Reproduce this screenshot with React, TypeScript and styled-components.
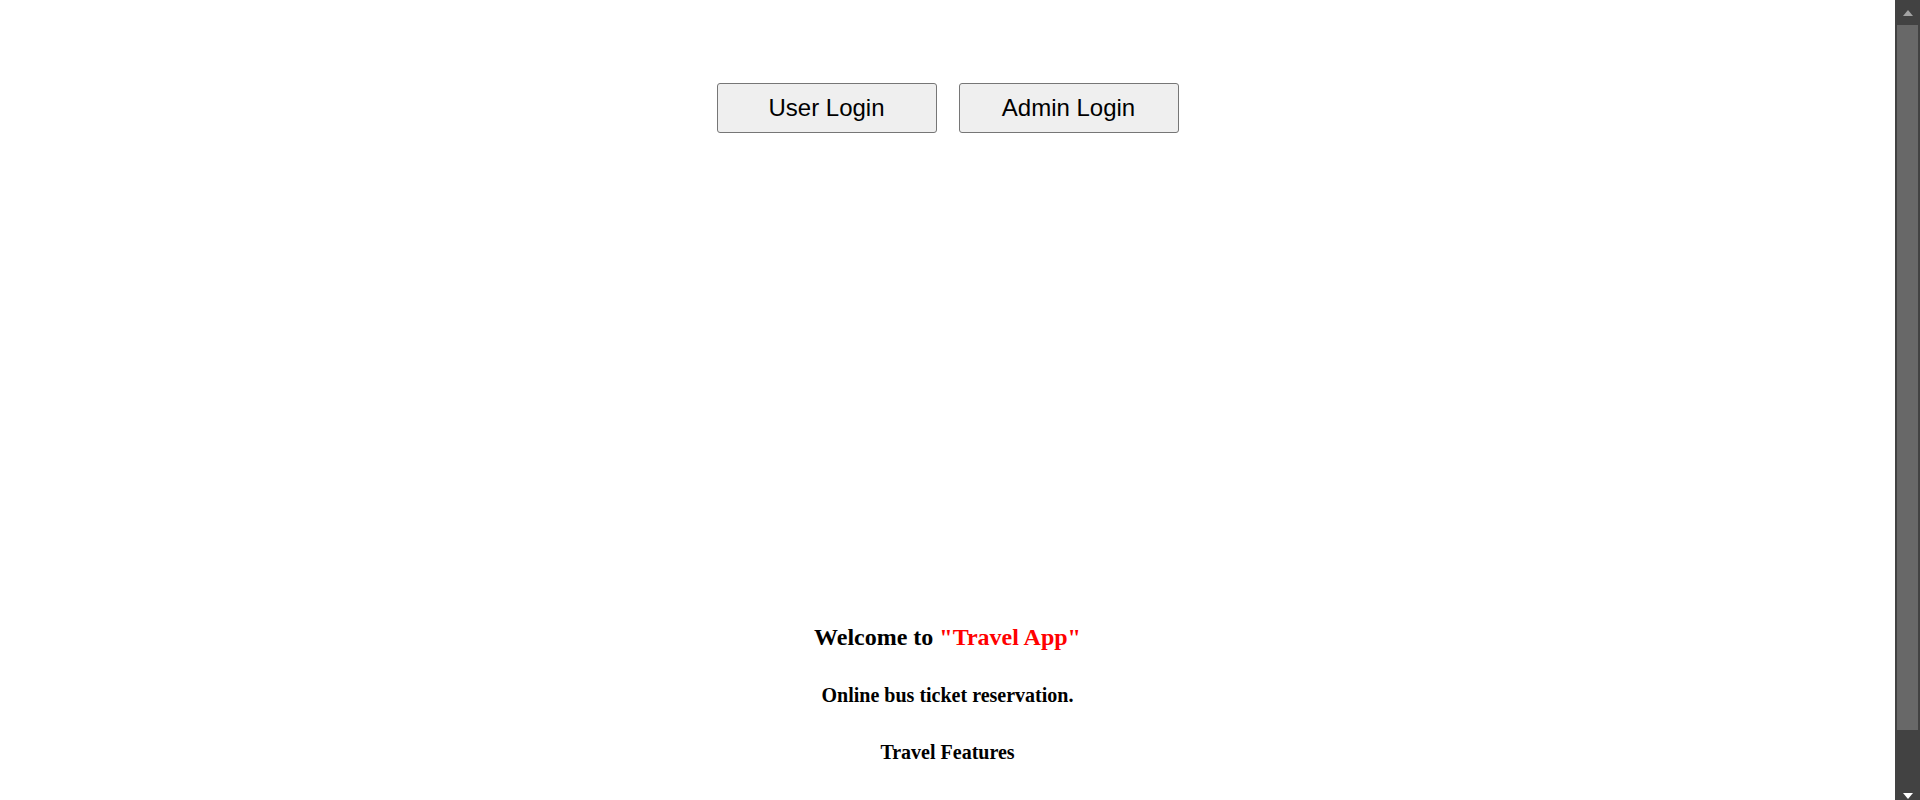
import React from "react";
import styled, { createGlobalStyle } from "styled-components";

const GlobalStyle = createGlobalStyle`
  html, body {
    margin: 0;
    padding: 0;
    background: #ffffff;
    overflow: hidden;
  }
  body {
    font-family: "Liberation Serif", "Times New Roman", serif;
    color: #000000;
  }
`;

const Shell = styled.div`
  display: flex;
  height: 100vh;
`;

const Main = styled.main`
  flex: 1;
  overflow-y: auto;
  scrollbar-width: none;
`;

const Page = styled.div`
  display: flex;
  flex-direction: column;
  align-items: center;
  padding-bottom: 90px;
`;

const Nav = styled.nav`
  display: flex;
  justify-content: center;
  gap: 22px;
  padding-top: 83px;
`;

const LoginButton = styled.button`
  width: 220px;
  height: 50px;
  padding: 0;
  font-family: "Liberation Sans", Arial, sans-serif;
  font-size: 24px;
  color: #000000;
  background: #efefef;
  border: 1px solid #767676;
  border-radius: 3px;
  cursor: pointer;
  &:hover {
    background: #e5e5e5;
  }
`;

const Hero = styled.section`
  width: 100%;
  height: 490px;
`;

const Welcome = styled.h2`
  margin: 0;
  font-size: 24px;
  line-height: 28px;
  font-weight: bold;
  text-align: center;
`;

const Brand = styled.span`
  color: #ff0000;
`;

const Heading = styled.h3<{ $gap: number }>`
  margin: ${(p) => p.$gap}px 0 0;
  font-size: 20px;
  line-height: 23px;
  font-weight: bold;
  text-align: center;
`;

/* window scrollbar, as it shows in the shot */
const Rail = styled.aside`
  width: 25px;
  flex-shrink: 0;
  display: flex;
  flex-direction: column;
  background: #424242;
`;

const Arrow = styled.div<{ $down?: boolean }>`
  height: 25px;
  display: flex;
  justify-content: center;
  align-items: ${(p) => (p.$down ? "flex-end" : "flex-start")};
  padding: ${(p) => (p.$down ? "0 0 1px" : "10px 0 0")};
  box-sizing: border-box;
  &::before {
    content: "";
    width: 0;
    height: 0;
    border-left: 5.5px solid transparent;
    border-right: 5.5px solid transparent;
    ${(p) =>
      p.$down
        ? "border-top: 6px solid #ffffff;"
        : "border-bottom: 6px solid #a3a3a3;"}
  }
`;

const Track = styled.div`
  flex: 1;
  padding: 0 0 0 2px;
  display: flex;
  flex-direction: column;
`;

const Thumb = styled.div`
  height: 705px;
  margin-right: 2px;
  background: #686868;
`;

function App() {
  return (
    <Shell>
      <GlobalStyle />
      <Main>
        <Page>
          <Nav>
            <LoginButton>User Login</LoginButton>
            <LoginButton>Admin Login</LoginButton>
          </Nav>
          <Hero />
          <Welcome>
            Welcome to <Brand>"Travel App"</Brand>
          </Welcome>
          <Heading $gap={33}>Online bus ticket reservation.</Heading>
          <Heading $gap={34}>Travel Features</Heading>
        </Page>
      </Main>
      <Rail>
        <Arrow />
        <Track>
          <Thumb />
        </Track>
        <Arrow $down />
      </Rail>
    </Shell>
  );
}

export default App;
